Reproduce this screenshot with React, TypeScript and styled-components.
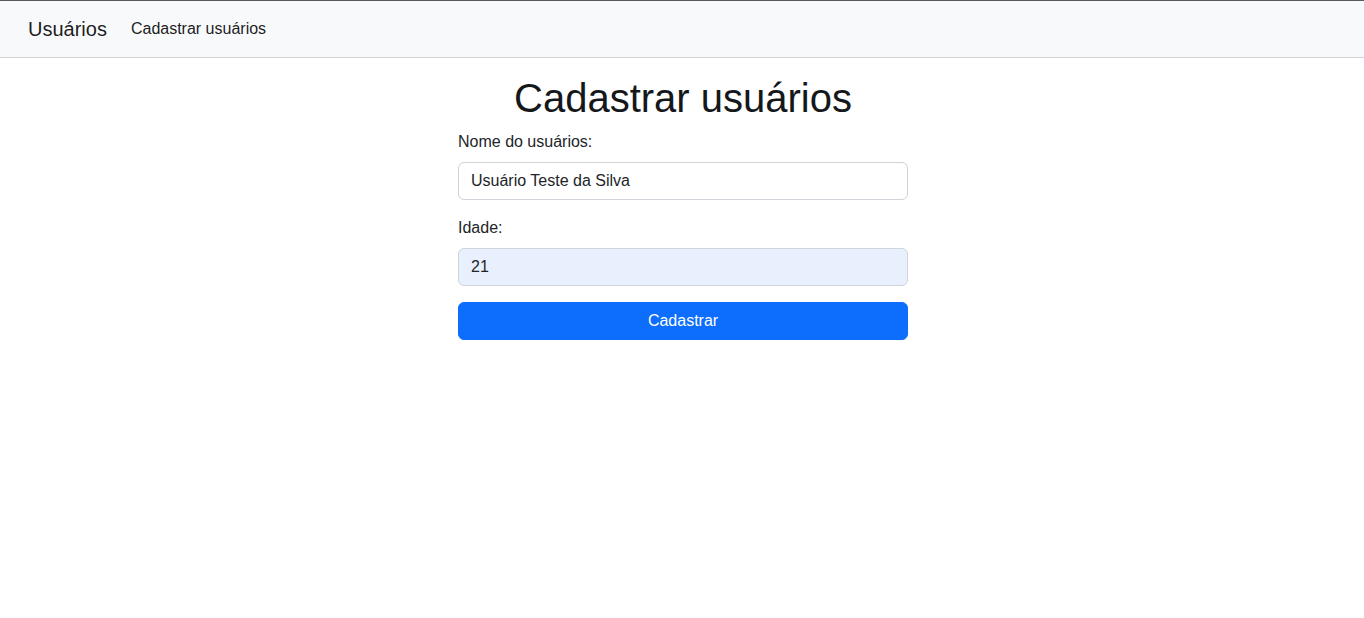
import React from "react";
import styled, { createGlobalStyle } from "styled-components";

const Global = createGlobalStyle`
  *, *::before, *::after { box-sizing: border-box; }
  body {
    margin: 0;
    font-family: "Liberation Sans", Arial, sans-serif;
    font-size: 16px;
    line-height: 1.5;
    color: #212529;
    background: #fff;
  }
`;

const Navbar = styled.nav`
  display: flex;
  align-items: center;
  height: 58px;
  padding: 0 28px;
  background: #f8f9fa;
  border-top: 1px solid #5a5a5a;
  border-bottom: 1px solid #cfd1d3;
`;

const Brand = styled.a`
  font-size: 20px;
  line-height: 30px;
  padding: 5px 0;
  margin-right: 16px;
  color: rgba(0, 0, 0, 0.9);
  text-decoration: none;
`;

const NavLink = styled.a`
  font-size: 16px;
  padding: 8px;
  color: rgba(0, 0, 0, 0.9);
  text-decoration: none;
`;

const Main = styled.main`
  width: 452px;
  padding-left: 2px;
  margin: 0 auto;
`;

const Title = styled.h1`
  margin: 16px 0 8px;
  font-size: 40px;
  font-weight: 500;
  line-height: 1.2;
  text-align: center;
  color: #15181b;
`;

const Group = styled.div`
  margin-bottom: 16px;
`;

const Label = styled.label`
  display: block;
  margin-bottom: 8px;
`;

const Input = styled.input<{ $autofill?: boolean }>`
  display: block;
  width: 100%;
  height: 38px;
  padding: 6px 12px;
  font-family: inherit;
  font-size: 16px;
  line-height: 1.5;
  color: #212529;
  background: ${(p) => (p.$autofill ? "#e8f0fe" : "#fff")};
  border: 1px solid #ced4da;
  border-radius: 6px;
  outline: none;
`;

const Button = styled.button`
  display: block;
  width: 100%;
  height: 38px;
  padding: 6px 12px;
  font-family: inherit;
  font-size: 16px;
  line-height: 1.5;
  color: #fff;
  background: #0d6efd;
  border: 1px solid #0d6efd;
  border-radius: 6px;
  cursor: pointer;
`;

export default function App() {
  return (
    <>
      <Global />
      <Navbar>
        <Brand href="#">Usuários</Brand>
        <NavLink href="#">Cadastrar usuários</NavLink>
      </Navbar>
      <Main>
        <Title>Cadastrar usuários</Title>
        <form onSubmit={(e) => e.preventDefault()}>
          <Group>
            <Label htmlFor="nome">Nome do usuários:</Label>
            <Input id="nome" defaultValue="Usuário Teste da Silva" />
          </Group>
          <Group>
            <Label htmlFor="idade">Idade:</Label>
            <Input id="idade" $autofill defaultValue="21" />
          </Group>
          <Button type="submit">Cadastrar</Button>
        </form>
      </Main>
    </>
  );
}
